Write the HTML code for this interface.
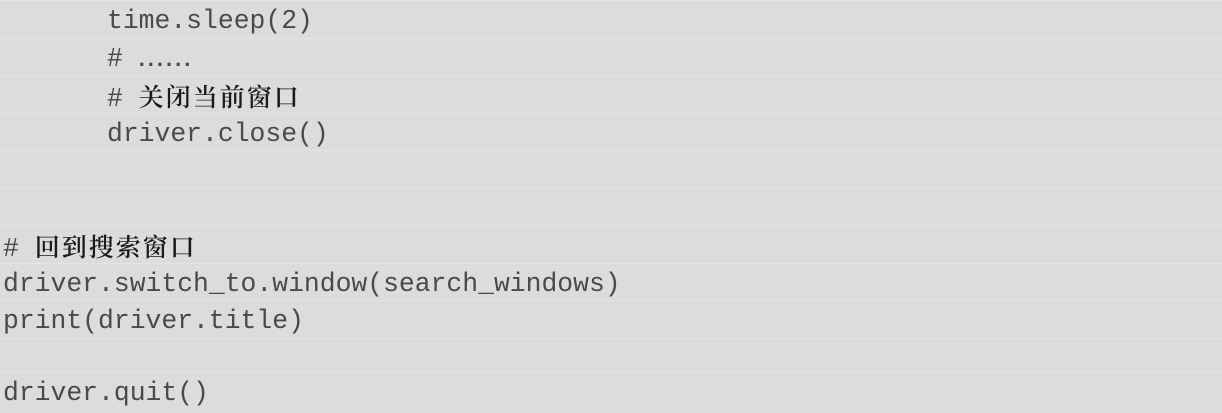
<!DOCTYPE html>
<html><head><meta charset="utf-8"><style>
html,body{margin:0;padding:0;background:#dcdcdc;}
body{width:1222px;height:407px;overflow:hidden;position:relative;}
.r{position:absolute;left:0;width:1222px;height:37.5px;border-top:1px solid #e4e4e4;box-sizing:border-box;font-family:"Liberation Mono","Noto Serif CJK SC",monospace;font-size:26.4px;line-height:40px;color:#4a4a4a;white-space:pre;}
.i{padding-left:107px}
.p{padding-left:3px}
.c{font-family:"Noto Serif CJK SC",serif;font-weight:600;color:#1a1a1a;font-size:25px;letter-spacing:2px}
.d{font-family:"Liberation Sans",sans-serif;font-size:22px;letter-spacing:3px;font-weight:bold}
</style></head><body>
<div class="r i" style="top:0">time.sleep(2)</div>
<div class="r i" style="top:37.5px"># <span class="d">......</span></div>
<div class="r i" style="top:75px"># <span class="c">关闭当前窗口</span></div>
<div class="r i" style="top:112.5px">driver.close()</div>
<div class="r" style="top:150px"></div>
<div class="r" style="top:187.5px"></div>
<div class="r p" style="top:225px"># <span class="c">回到搜索窗口</span></div>
<div class="r p" style="top:262.5px">driver.switch_to.window(search_windows)</div>
<div class="r p" style="top:300px">print(driver.title)</div>
<div class="r" style="top:337.5px"></div>
<div class="r p" style="top:372px">driver.quit()</div>
</body></html>
